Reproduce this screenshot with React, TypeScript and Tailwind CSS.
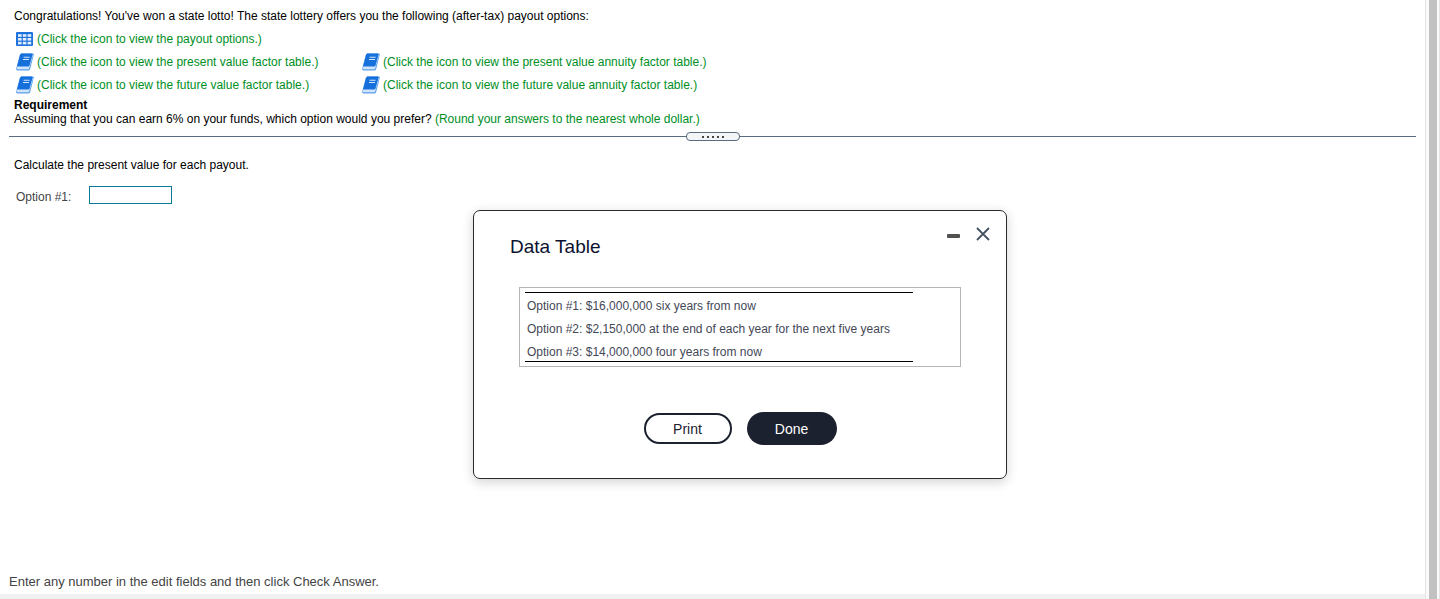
import { useState } from 'react';

const options = [
  'Option #1: $16,000,000 six years from now',
  'Option #2: $2,150,000 at the end of each year for the next five years',
  'Option #3: $14,000,000 four years from now',
];

function GridIcon() {
  return (
    <svg width="18" height="16" viewBox="0 0 18 16" className="shrink-0">
      <rect x="0" y="1" width="17" height="14" rx="1" fill="#1f72dc" />
      {[3.2, 7, 10.8].map((y) =>
        [2, 6.8, 11.6].map((x) => <rect key={`${x}-${y}`} x={x} y={y} width="3.6" height="2.6" fill="#e3effc" />)
      )}
    </svg>
  );
}

function BookIcon() {
  return (
    <svg width="18" height="18" viewBox="0 0 18 18" className="shrink-0">
      <path d="M6 .5h10.600c.9 0 1.300.6 1.100 1.400L14.300 15.400c-.4 1.400-1.100 2.100-2.300 2.100H1.600C.5 17.500-.1 16.700.2 15.500L3.700 2.300C4.100 1 4.800.5 6 .5Z" fill="#5b9eec" />
      <path d="M.9 14.200c.2-.5.600-.7 1.100-.7h10.100c.8 0 1.300-.4 1.500-1.200L16.300 2l.6.300-3.500 12.500c-.3 1-.9 1.500-1.700 1.500H2c-.9 0-1.300-.8-1.100-2.100Z" fill="#cfe3fa" />
      <path d="M6 .5h9.300c.9 0 1.300.6 1.100 1.300L13.500 12c-.2.800-.8 1.300-1.600 1.300H1.100L4 2.200C4.400 1 5 .5 6 .5Z" fill="#1670dc" />
      <path d="M7.600 4.200h6M7 6.500h6" stroke="#d3e6fb" strokeWidth="1.100" />
    </svg>
  );
}

function IconLink({ icon, children }: { icon: 'grid' | 'book'; children: string }) {
  return (
    <a href="#" className="flex h-[23px] items-center gap-[3px] text-[#008f1f]">
      {icon === 'grid' ? <GridIcon /> : <BookIcon />}
      <span>{children}</span>
    </a>
  );
}

function Divider() {
  return (
    <div className="mx-[9px] mt-1.5 flex items-center">
      <div className="h-px flex-1 bg-[#5b6b80]" />
      <button
        aria-label="Resize panels"
        className="flex h-[9px] w-[54px] items-center justify-center gap-[3px] rounded border border-[#5b6b80] bg-[#f3f5f7]"
      >
        {[0, 1, 2, 3, 4].map((i) => (
          <span key={i} className="size-0.5 bg-[#444]" />
        ))}
      </button>
      <div className="h-px flex-1 bg-[#5b6b80]" />
    </div>
  );
}

function DataTableDialog() {
  return (
    <section
      role="dialog"
      aria-labelledby="dialog-title"
      className="absolute left-[473px] top-[210px] w-[534px] rounded-[7px] border border-[#2b2b2e] bg-white px-9 pb-[33px] pt-3 shadow-[0_3px_12px_rgba(0,0,0,0.18)]"
    >
      <div className="-mr-[21px] flex items-start justify-between">
        <h2 id="dialog-title" className="mt-3 text-[19px] leading-6 text-[#0b1330]">Data Table</h2>
        <div className="flex items-center gap-3.5">
          <button aria-label="Minimize" className="flex h-[22px] w-3.5 items-center pt-1">
            <span className="h-1 w-[13px] rounded-[1px] bg-[#50524f]" />
          </button>
          <button aria-label="Close" className="flex size-4 items-center justify-center">
            <svg width="14" height="14" viewBox="0 0 14 14" stroke="#435362" strokeWidth="1.800">
              <path d="M1 1l12 12M13 1L1 13" />
            </svg>
          </button>
        </div>
      </div>
      <div className="mx-[9px] mt-7 border border-[#b5b5b5] px-[5px] py-1">
        <table className="w-[388px] border-y border-black text-left text-[#444856]">
          <tbody>
            {options.map((option) => (
              <tr key={option} className="h-[23px]">
                <td className="whitespace-nowrap pl-0.5 pt-1">{option}</td>
              </tr>
            ))}
          </tbody>
        </table>
      </div>
      <div className="mt-[45px] flex items-center justify-center gap-[15px] text-sm">
        <button className="h-[31px] w-[88px] rounded-full border-2 border-[#1c2130] text-[#1c2130]">Print</button>
        <button className="h-[33px] w-[90px] rounded-full bg-[#1c2130] font-medium text-white">Done</button>
      </div>
    </section>
  );
}

export default function App() {
  const [answer, setAnswer] = useState('');

  return (
    <div className="flex min-h-screen bg-white font-['Liberation_Sans',Arial,sans-serif] text-xs leading-[14px] text-black">
      <div className="relative flex min-w-0 flex-1 flex-col">
        <main className="flex-1">
          <div className="px-3.5 pt-[9px]">
            <p>Congratulations! You've won a state lotto! The state lottery offers you the following (after-tax) payout options:</p>
            <div className="ml-0.5 mt-1 grid w-fit grid-cols-[346px_auto]">
              <div className="col-span-2">
                <IconLink icon="grid">(Click the icon to view the payout options.)</IconLink>
              </div>
              <IconLink icon="book">(Click the icon to view the present value factor table.)</IconLink>
              <IconLink icon="book">(Click the icon to view the present value annuity factor table.)</IconLink>
              <IconLink icon="book">(Click the icon to view the future value factor table.)</IconLink>
              <IconLink icon="book">(Click the icon to view the future value annuity factor table.)</IconLink>
            </div>
            <h1 className="mt-0.5 font-bold">Requirement</h1>
            <p>
              Assuming that you can earn 6% on your funds, which option would you prefer?{' '}
              <span className="text-[#008f1f]">(Round your answers to the nearest whole dollar.)</span>
            </p>
          </div>
          <Divider />
          <div className="px-3.5 pt-[17px]">
            <p>Calculate the present value for each payout.</p>
            <div className="ml-0.5 mt-3.5 flex items-center">
              <label htmlFor="option-1" className="w-[73px] pt-1 text-[#444]">Option #1:</label>
              <input
                id="option-1"
                type="text"
                value={answer}
                onChange={(e) => setAnswer(e.target.value)}
                className="h-[18px] w-[83px] border border-[#0b7a99] px-1 outline-none"
              />
            </div>
          </div>
        </main>
        <footer>
          <p className="px-[9px] pb-[5px] text-[13px] leading-[14px] text-[#444]">
            Enter any number in the edit fields and then click Check Answer.
          </p>
          <div className="h-[5px] bg-[#f1f1f1]" />
        </footer>
        <DataTableDialog />
      </div>
      <div className="flex w-[15px] justify-center border-x border-[#e4e4e4] bg-[#fafafa]">
        <div className="w-2 bg-[#c1c1c1]" />
      </div>
    </div>
  );
}
